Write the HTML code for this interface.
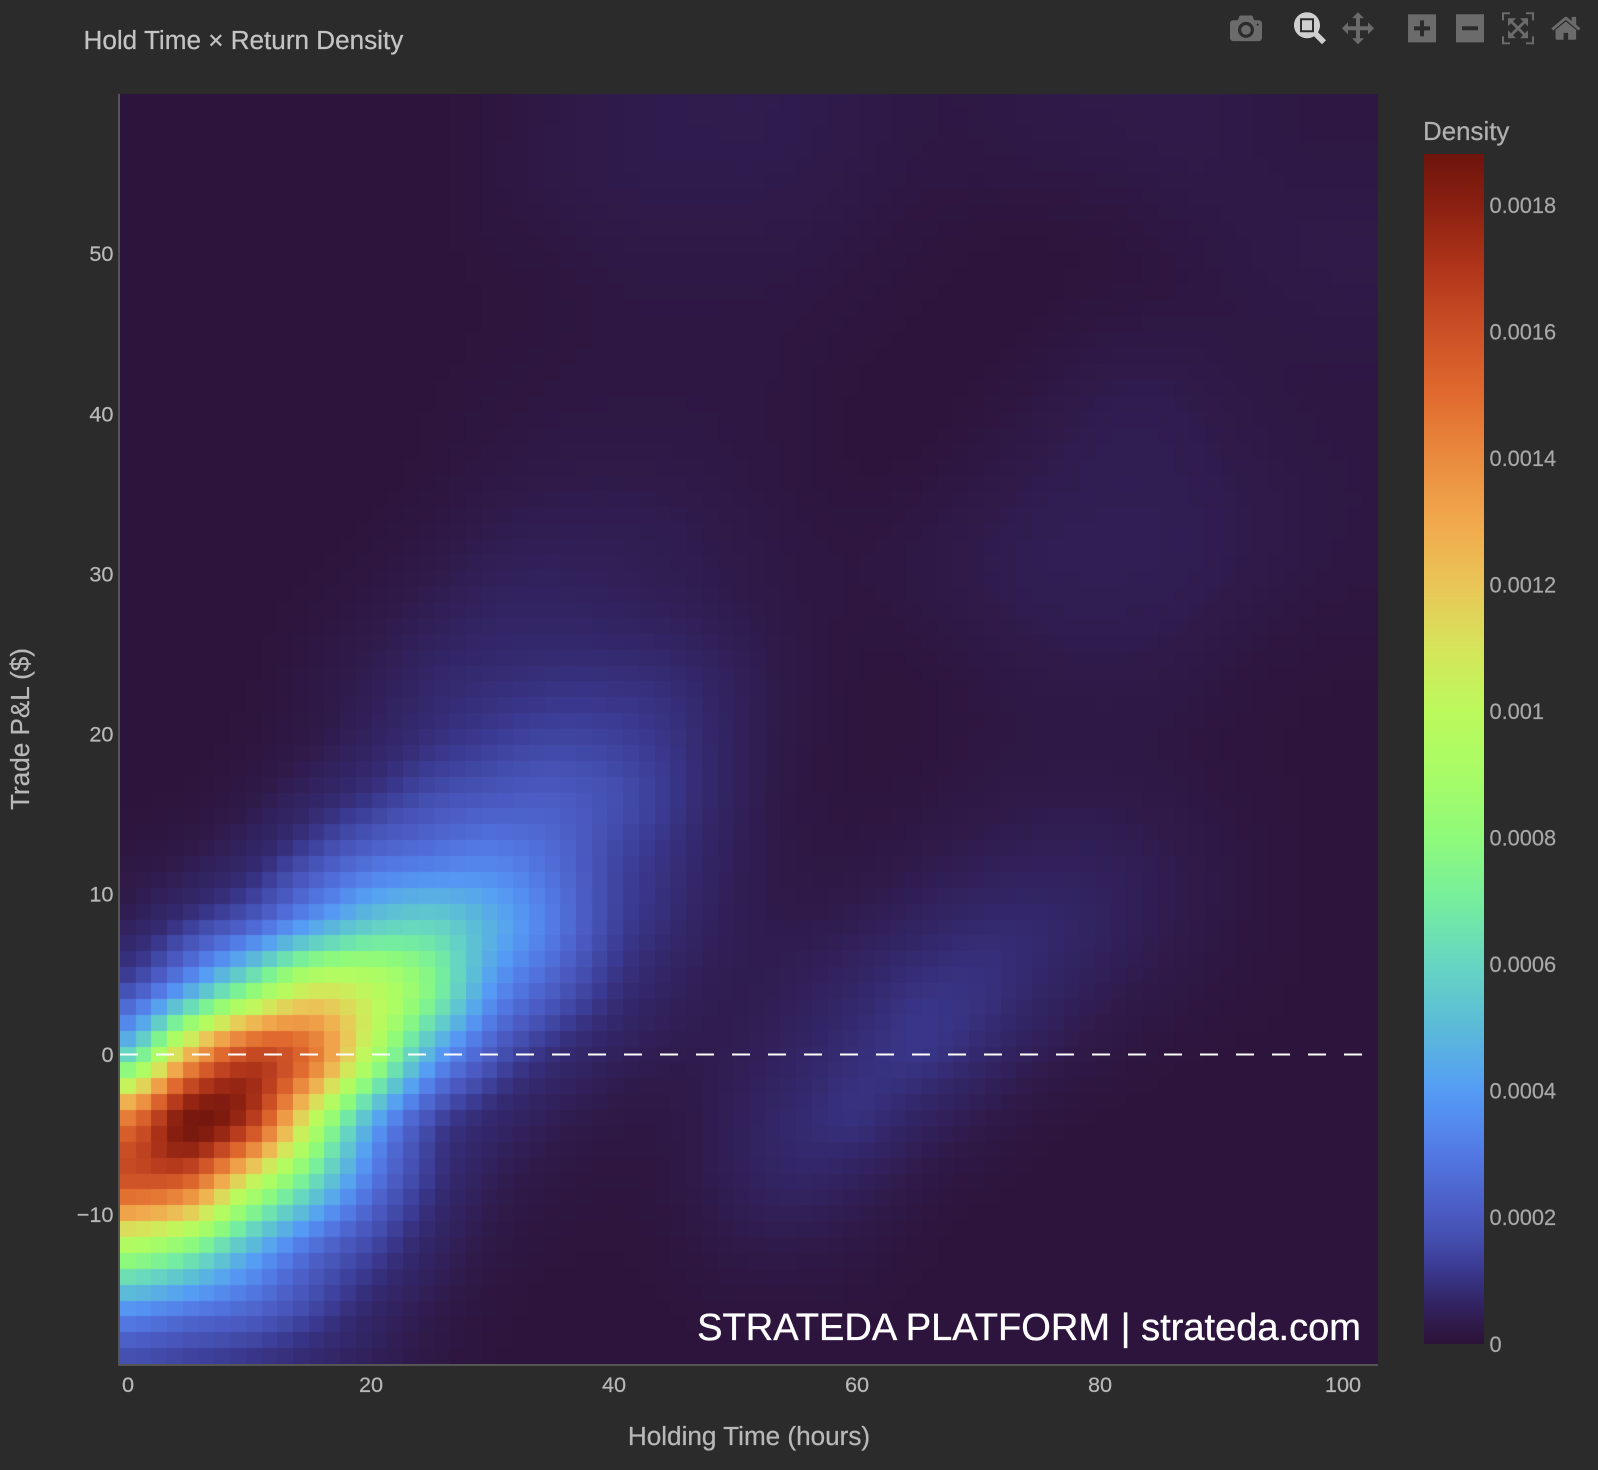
<!DOCTYPE html>
<html>
<head>
<meta charset="utf-8">
<style>
html,body{margin:0;padding:0;background:#2b2b2b;}
#wrap{position:relative;width:1598px;height:1470px;overflow:hidden;background:#2b2b2b;font-family:"Liberation Sans",Arial,sans-serif;}
#hm{position:absolute;left:120px;top:94px;width:1258px;height:1270px;background:#2c1339;}
#cb{position:absolute;left:1424px;top:154px;width:60px;height:1190px;background:linear-gradient(to top,#2c1238 0%,#2f1a49 1.6%,#31205a 2.7%,#342a70 4.3%,#3b3a92 6.4%,#4450b0 9%,#4a58bf 10.6%,#5379e4 16%,#559cf5 21.3%,#5bbbd8 26.6%,#66d5c2 31.9%,#76ee9e 37.2%,#8ffa7a 42.6%,#a8fc66 47.9%,#bcfa5c 53.2%,#d6e45a 58.5%,#eac557 63.8%,#f1a84c 69.1%,#e98a3e 74.5%,#e06a2e 79.8%,#cc5026 85.1%,#b0351a 90.4%,#8a2011 95.7%,#6e140c 100%);}
svg{position:absolute;left:0;top:0;}
text{paint-order:stroke;}
</style>
</head>
<body>
<div id="wrap">
<canvas id="hm" width="1258" height="1270"></canvas>
<div id="cb"></div>
<svg width="1598" height="1470" viewBox="0 0 1598 1470" font-family="'Liberation Sans',Arial,sans-serif">
  <rect x="118" y="94" width="2" height="1272" fill="#555"/>
  <rect x="118" y="1364" width="1260" height="2" fill="#555"/>
  <line x1="120" y1="1054.5" x2="1378" y2="1054.5" stroke="#fff" stroke-width="2" stroke-dasharray="18 18"/>
  <text x="83.5" y="49" font-size="26.1" fill="#c4c4c4" stroke="#c4c4c4" stroke-width=".25">Hold Time × Return Density</text>

  <g font-size="21.7" fill="#b8b8b8" stroke="#b8b8b8" stroke-width=".2" text-anchor="middle">
    <text x="128" y="1392">0</text>
    <text x="371" y="1392">20</text>
    <text x="614" y="1392">40</text>
    <text x="857" y="1392">60</text>
    <text x="1100" y="1392">80</text>
    <text x="1343" y="1392">100</text>
  </g>
  <g font-size="21.7" fill="#b8b8b8" stroke="#b8b8b8" stroke-width=".2" text-anchor="end">
    <text x="113.5" y="261">50</text>
    <text x="113.5" y="421.5">40</text>
    <text x="113.5" y="581.5">30</text>
    <text x="113.5" y="741.5">20</text>
    <text x="113.5" y="901.5">10</text>
    <text x="113.5" y="1062">0</text>
    <text x="113.5" y="1222">−10</text>
  </g>
  <text x="749" y="1445" font-size="26.1" fill="#b8b8b8" stroke="#b8b8b8" stroke-width=".25" text-anchor="middle">Holding Time (hours)</text>
  <text transform="translate(29 729) rotate(-90)" font-size="26.1" fill="#b8b8b8" stroke="#b8b8b8" stroke-width=".25" text-anchor="middle">Trade P&amp;L ($)</text>

  <text x="1423" y="140" font-size="25.9" fill="#b0b0b0" stroke="#b0b0b0" stroke-width=".25">Density</text>
  <g font-size="21.8" fill="#a8a8a8" stroke="#a8a8a8" stroke-width=".2">
    <text x="1489.5" y="1352">0</text>
    <text x="1489.5" y="1225">0.0002</text>
    <text x="1489.5" y="1098.5">0.0004</text>
    <text x="1489.5" y="972">0.0006</text>
    <text x="1489.5" y="845.5">0.0008</text>
    <text x="1489.5" y="719">0.001</text>
    <text x="1489.5" y="592.5">0.0012</text>
    <text x="1489.5" y="466">0.0014</text>
    <text x="1489.5" y="339.5">0.0016</text>
    <text x="1489.5" y="213">0.0018</text>
  </g>
  <text x="1361" y="1340" font-size="38.05" fill="#fff" stroke="#fff" stroke-width=".35" text-anchor="end">STRATEDA PLATFORM | strateda.com</text>

  <g fill="#6b6b6b">
    <path transform="translate(1230 39.5) scale(.032 -.032)" d="M500 450c-83 0-150-67-150-150 0-83 67-150 150-150 83 0 150 67 150 150 0 83-67 150-150 150z m400 150h-120c-16 0-34 13-39 29l-31 93c-6 15-23 28-40 28h-340c-16 0-34-13-39-28l-31-93c-6-16-23-29-40-29h-120c-55 0-100-45-100-100v-450c0-55 45-100 100-100h800c55 0 100 45 100 100v450c0 55-45 100-100 100z m-400-550c-138 0-250 112-250 250 0 138 112 250 250 250 138 0 250-112 250-250 0-138-112-250-250-250z m365 380c-19 0-35 16-35 35 0 19 16 35 35 35 19 0 35-16 35-35 0-19-16-35-35-35z"/>
    <path fill="#cfcfcf" transform="translate(1294 39.5) scale(.032 -.032)" d="m1000-25l-250 251c40 63 63 138 63 218 0 224-182 406-407 406-224 0-406-182-406-406s183-406 407-406c80 0 155 22 218 62l250-250 125 125z m-812 250l0 438 437 0 0-438-437 0z m62 375l313 0 0-312-313 0 0 312z"/>
    <path transform="translate(1342 39.5) scale(.032 -.032)" d="m1000 350l-187 188 0-125-250 0 0 250 125 0-188 187-187-187 125 0 0-250-250 0 0 125-188-188 186-187 0 125 252 0 0-250-125 0 187-188 188 188-125 0 0 250 250 0 0-126 187 188z"/>
    <path transform="translate(1408 39.5) scale(.032 -.032)" d="m1 787l0-875 875 0 0 875-875 0z m687-500l-187 0 0-187-125 0 0 187-188 0 0 125 188 0 0 187 125 0 0-187 187 0 0-125z"/>
    <path transform="translate(1456 39.5) scale(.032 -.032)" d="m0 788l0-876 875 0 0 876-875 0z m688-500l-500 0 0 125 500 0 0-125z"/>
    <path transform="translate(1502 39.5) scale(.032 -.032)" d="m250 850l-187 0-63 0 0-62 0-188 63 0 0 188 187 0 0 62z m688 0l-188 0 0-62 188 0 0-188 62 0 0 188 0 62-62 0z m-875-938l0 188-63 0 0-188 0-62 63 0 187 0 0 62-187 0z m875 188l0-188-188 0 0-62 188 0 62 0 0 62 0 188-62 0z m-125 188l-1 0-93-94-156 156 156 156 92-93 2 0 0 250-250 0 0-2 93-92-156-156-156 156 94 92 0 2-250 0 0-250 0 0 93 93 157-156-157-156-93 94 0 0 0-250 250 0 0 0-94 93 156 157 156-157-93-93 0 0 250 0 0 250z"/>
    <path transform="translate(1551 39.5) scale(.032 -.032)" d="m786 296v-267q0-15-11-26t-25-10h-214v214h-143v-214h-214q-15 0-25 10t-11 26v267q0 1 0 2t0 2l321 264 321-264q1-1 1-4z m124 39l-34-41q-5-5-12-6h-2q-7 0-12 3l-386 322-386-322q-7-4-13-4-7 2-12 7l-34 41q-4 5-3 13t6 12l401 334q18 15 42 15t43-15l136-114v109q0 8 5 13t13 5h107q8 0 13-5t5-13v-227l122-102q5-5 6-12t-4-13z"/>
  </g>
</svg>
</div>
<script>
(function(){
var G=[
[.7,.7,.7,.7,.7,.7,1,2,3,3.5,3.5,3.5,3,2,2,3,3,3,3,2,2,2],
[.7,.7,.7,.7,.7,.7,1.5,3,3.5,3.5,3.5,3.5,3,2,2,2.5,2.5,3,3,2,2,2],
[.7,.7,.7,.7,.7,.7,1.5,2,3,3,3,3,2,1.5,1,1,1,2,2.5,3,3,3],
[.7,.7,.7,.7,.7,.7,1,1,2,2,2,2,1.5,1,.7,.7,1,1,2,2.5,3,3],
[.7,.7,.7,.7,.7,.7,1,1.5,2,2,2,1.5,1,.7,.7,1,2.5,3,2,2,2,2],
[.7,.7,.7,.7,.7,1,1.5,2,2,2,2,1.5,.7,.7,1,2.5,4,4,3,2,2,2],
[.7,.7,.7,.7,.7,1,2,3,3,3,2,1.5,.7,1,2,3.5,4,4,3.5,2.5,2,2],
[.7,.7,.7,.7,1,2,4,4.5,4.5,4,3,2,1.5,2.5,3.5,4.5,4.5,4.5,4,3,2,1.5],
[.7,.7,.7,1,2,4,6,6,5,4,3,2,1.5,2,3,4,4,4,3,2,1.5,1],
[.7,.7,.7,2,4,7,8,9,9,8,5,2.5,1,1,2,3,3,3,2,1,1,1],
[.7,.7,1,2,5,9,12,14,13,10,5,2,1,1,1.5,2,2,2,1,1,.7,.7],
[.7,1,2,6,11,17,20,21,17,11,5,2,1,1.5,2.5,3,3,2.5,1.5,1,.7,.7],
[1,3,7,17,27,31,33,26,15,9,4,2,2,3,4,5,5,4,2.5,1,.7,.7],
[4,13,24,42,57,60,46,30,14,8,4,3,4,6,8,8,6,4,2,1,.7,.7],
[18,44,78,107,100,75,38,21,10,5,3,5,7,10,10,7,4,2.5,1.5,1,.7,.7],
[60,125,162,148,95,45,20,9,5,3,4,6,9,11,8,4,2,1,.7,.7,.7,.7],
[145,185,170,105,48,17,7,4,2,2,5,8,10,6,3,1,.7,.7,.7,.7,.7,.7],
[158,152,105,65,30,11,4,2,1,2,5,7,5,2,1,.7,.7,.7,.7,.7,.7,.7],
[93,78,50,28,15,6,2,1,1,1,3,3,2,1,.7,.7,.7,.7,.7,.7,.7,.7],
[37,30,24,15,7,3,1,.7,.7,1,1,1,1,.7,.7,.7,.7,.7,.7,.7,.7,.7],
[13,11,8,5,2.5,1,.7,.7,.7,.7,.7,.7,.7,.7,.7,.7,.7,.7,.7,.7,.7,.7]
];
var CM=[[0,"2c1238"],[3,"2f1a49"],[5,"31205a"],[8,"342a70"],[12,"3b3a92"],[17,"4450b0"],[20,"4a58bf"],[30,"5379e4"],[40,"559cf5"],[50,"5bbbd8"],[60,"66d5c2"],[70,"76ee9e"],[80,"8ffa7a"],[90,"a8fc66"],[100,"bcfa5c"],[110,"d6e45a"],[120,"eac557"],[130,"f1a84c"],[140,"e98a3e"],[150,"e06a2e"],[160,"cc5026"],[170,"b0351a"],[180,"8a2011"],[188,"6e140c"]];
function hex(h){return [parseInt(h.substr(0,2),16),parseInt(h.substr(2,2),16),parseInt(h.substr(4,2),16)];}
var stops=CM.map(function(s){return [s[0],hex(s[1])];});
function col(v){
  if(v<=0)v=0; if(v>=188)v=188;
  for(var i=1;i<stops.length;i++){
    if(v<=stops[i][0]){
      var a=stops[i-1],b=stops[i],t=(v-a[0])/(b[0]-a[0]);
      return "rgb("+Math.round(a[1][0]+(b[1][0]-a[1][0])*t)+","+Math.round(a[1][1]+(b[1][1]-a[1][1])*t)+","+Math.round(a[1][2]+(b[1][2]-a[1][2])*t)+")";
    }
  }
  return "#6e140c";
}
function cr(a,b,c,d,t){return 0.5*((2*b)+(-a+c)*t+(2*a-5*b+4*c-d)*t*t+(-a+3*b-3*c+d)*t*t*t);}
function g(j,k){
  j=Math.max(0,Math.min(G.length-1,j));
  k=Math.max(0,Math.min(G[0].length-1,k));
  return G[j][k];
}
function val(X,Y){
  var kf=X/5,jf=(60-Y)/4;
  var k=Math.floor(kf),j=Math.floor(jf),tx=kf-k,ty=jf-j,r=[];
  for(var m=-1;m<3;m++){
    r.push(cr(g(j+m,k-1),g(j+m,k),g(j+m,k+1),g(j+m,k+2),tx));
  }
  return cr(r[0],r[1],r[2],r[3],ty);
}
var ctx=document.getElementById("hm").getContext("2d");
var n=80,W=1258,H=1270,V=[],L=[],c,r;
for(c=0;c<n;c++){
  V[c]=[];L[c]=[];
  var X=((120+(c+.5)*W/n)-128)/12.15;
  for(r=0;r<n;r++){
    var Y=(1054.5-(94+(r+.5)*H/n))/16;
    var v=Math.max(0.5,val(X,Y));
    V[c][r]=v;L[c][r]=Math.min(v,12);
  }
}
function blur(A,R){
  var B=[],i,j,m,s,w;
  for(i=0;i<n;i++){B[i]=[];for(j=0;j<n;j++){s=0;w=0;for(m=-R;m<=R;m++){var q=i+m;if(q>=0&&q<n){s+=A[q][j];w++;}}B[i][j]=s/w;}}
  var C=[];
  for(i=0;i<n;i++){C[i]=[];for(j=0;j<n;j++){s=0;w=0;for(m=-R;m<=R;m++){var p=j+m;if(p>=0&&p<n){s+=B[i][p];w++;}}C[i][j]=s/w;}}
  return C;
}
var S=blur(blur(L,2),2);
for(c=0;c<n;c++){
  var x0=Math.round(c*W/n),x1=Math.round((c+1)*W/n);
  for(r=0;r<n;r++){
    var y0=Math.round(r*H/n),y1=Math.round((r+1)*H/n);
    var t=Math.max(0,Math.min(1,(V[c][r]-5)/7));
    ctx.fillStyle=col(V[c][r]*t+Math.min(S[c][r],V[c][r]+1.5)*(1-t));
    ctx.fillRect(x0,y0,x1-x0,y1-y0);
  }
}
})();
</script>
</body>
</html>
